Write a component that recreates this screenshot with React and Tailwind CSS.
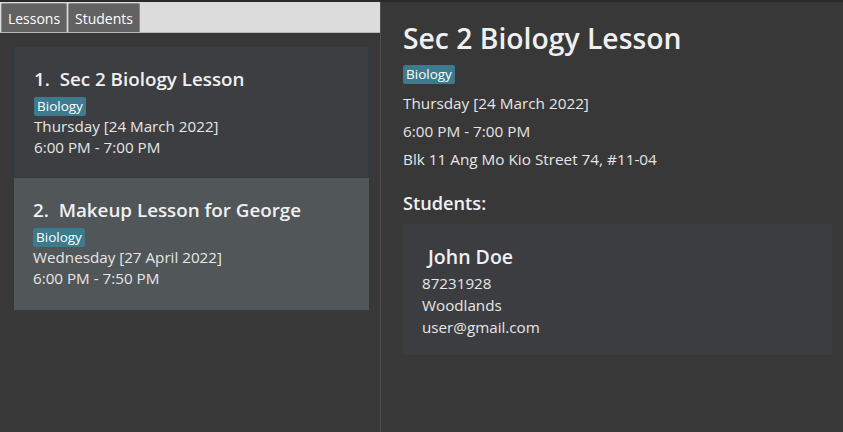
export default function App() {
  const font = { fontFamily: '"Open Sans", "Noto Sans", sans-serif' };
  const Badge = () => (
    <span className="inline-block rounded-[2px] bg-[#3c7a8d] px-[3px] text-[13.5px] leading-[19px] text-white">Biology</span>
  );
  const LessonCard = ({ idx, title, date, time, bg, border }) => (
    <div className={`h-[132px] ${bg} ${border} pl-[19px] pt-[19px]`}>
      <div className="text-[18.8px] leading-[26px] font-semibold text-[#f0f0f0] whitespace-pre">{`${idx}.  ${title}`}</div>
      <div className="mt-[4px] leading-[19px]"><Badge /></div>
      <div className="text-[15.2px] leading-[21px] text-[#e6e6e6]">{date}</div>
      <div className="text-[15.2px] leading-[21px] text-[#e6e6e6]">{time}</div>
    </div>
  );
  return (
    <div style={font} className="w-[843px] h-[432px] bg-[#383838] border-t-2 border-[#2a2a2a] flex overflow-hidden">
      <div className="w-[380px] flex flex-col">
        <div className="h-[31px] bg-[#dcdcdc] border-b border-[#b8b8b8] flex items-end pl-[1px] gap-[1px]">
          <div className="h-[29px] w-[66px] bg-[#626262] border border-[#8a8a8a] border-b-0 rounded-t-[2px] flex items-center justify-center text-[14px] text-white">Lessons</div>
          <div className="h-[29px] w-[72px] bg-[#626262] border border-[#8a8a8a] border-b-0 rounded-t-[2px] flex items-center justify-center text-[14px] text-white">Students</div>
        </div>
        <div className="px-[14px] pt-[13px] pr-[11px]">
          <LessonCard idx="1" title="Sec 2 Biology Lesson" date="Thursday [24 March 2022]" time="6:00 PM - 7:00 PM" bg="bg-[#3c3e41]" border="border border-[#323c40]" />
          <LessonCard idx="2" title="Makeup Lesson for George" date="Wednesday [27 April 2022]" time="6:00 PM - 7:50 PM" bg="bg-[#515658]" border="" />
        </div>
      </div>
      <div className="w-px bg-[#4e4e4e]" />
      <div className="flex-1 pl-[22px] pr-[11px] pt-[17px]">
        <div className="text-[28.3px] leading-[38px] font-semibold text-[#f0f0f0]">Sec 2 Biology Lesson</div>
        <div className="mt-[7px] leading-[19px]"><Badge /></div>
        <div className="mt-[5px] text-[15.3px] leading-[28px] text-[#e6e6e6]">Thursday [24 March 2022]</div>
        <div className="text-[15.3px] leading-[28px] text-[#e6e6e6]">6:00 PM - 7:00 PM</div>
        <div className="text-[15.3px] leading-[28px] text-[#e6e6e6]">Blk 11 Ang Mo Kio Street 74, #11-04</div>
        <div className="mt-[18px] text-[18.2px] leading-[24px] font-semibold text-[#f0f0f0]">Students:</div>
        <div className="mt-[9px] h-[131px] bg-[#3c3d40] pl-[19px] pt-[19px]">
          <div className="pl-[6px] text-[19.5px] leading-[28px] font-semibold text-[#f0f0f0]">John Doe</div>
          <div className="mt-[1px] text-[15.2px] leading-[22px] text-[#e6e6e6]">87231928</div>
          <div className="text-[15.2px] leading-[22px] text-[#e6e6e6]">Woodlands</div>
          <div className="text-[15.2px] leading-[22px] text-[#e6e6e6]">user@gmail.com</div>
        </div>
      </div>
    </div>
  );
}
